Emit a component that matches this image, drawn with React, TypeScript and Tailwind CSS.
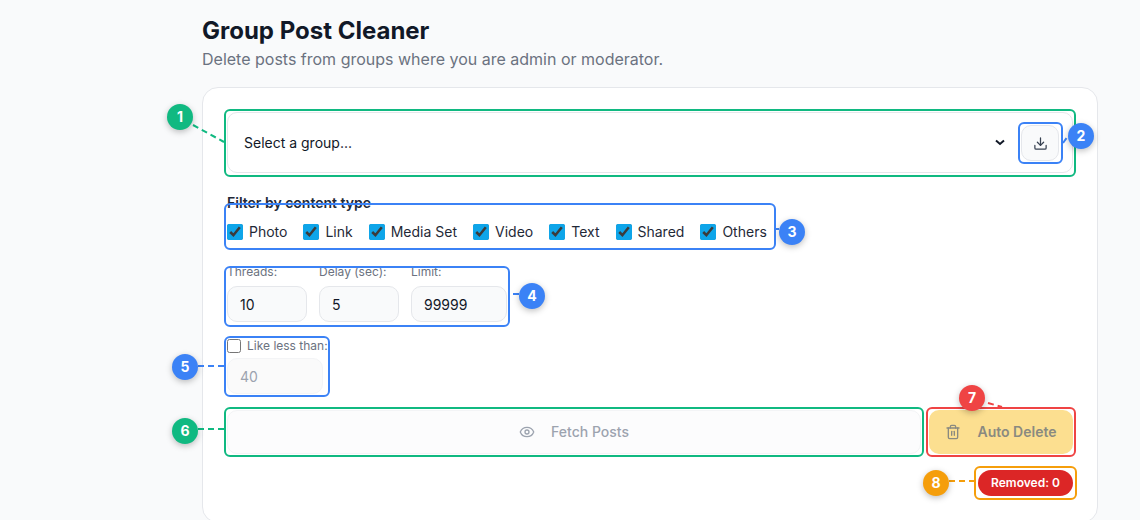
import { Download, Eye, Trash2 } from 'lucide-react';

const contentTypes = ['Photo', 'Link', 'Media Set', 'Video', 'Text', 'Shared', 'Others'];

// highlight frames drawn over the form
const frames = [
  { cls: 'left-[224px] top-[109px] w-[852px] h-[68px] border-[#10b981]' },
  { cls: 'left-[1018px] top-[122px] w-[45px] h-[42px] border-[#3b82f6]' },
  { cls: 'left-[224px] top-[203px] w-[552px] h-[47px] border-[#3b82f6]' },
  { cls: 'left-[224px] top-[266px] w-[286px] h-[61px] border-[#3b82f6]' },
  { cls: 'left-[224px] top-[336px] w-[106px] h-[61px] border-[#3b82f6]' },
  { cls: 'left-[224px] top-[407px] w-[700px] h-[50px] border-[#10b981]' },
  { cls: 'left-[926px] top-[407px] w-[150px] h-[50px] border-[#ef4444]' },
  { cls: 'left-[974px] top-[466px] w-[103px] h-[34px] border-[#f59e0b]' },
];

const badges = [
  { n: 1, cls: 'left-[167px] top-[104px] bg-[#10b981]' },
  { n: 2, cls: 'left-[1068px] top-[123px] bg-[#3b82f6]' },
  { n: 3, cls: 'left-[779px] top-[219px] bg-[#3b82f6]' },
  { n: 4, cls: 'left-[519px] top-[283px] bg-[#3b82f6]' },
  { n: 5, cls: 'left-[172px] top-[354px] bg-[#3b82f6]' },
  { n: 6, cls: 'left-[172px] top-[418px] bg-[#10b981]' },
  { n: 7, cls: 'left-[959px] top-[385px] bg-[#ef4444]' },
  { n: 8, cls: 'left-[923px] top-[470px] bg-[#f59e0b]' },
];

const inputCls =
  'h-9 rounded-[10px] border border-[#e5e7eb] bg-[#f9fafb] px-3 text-sm text-[#111827] outline-none';

export default function App() {
  return (
    <div className="relative h-[520px] overflow-hidden bg-[#f9fafb] pl-[202px] pt-[15px] font-['Inter',sans-serif]">
      <h1 className="text-2xl font-bold text-[#111827]">Group Post Cleaner</h1>
      <p className="text-base text-[#6b7280]">
        Delete posts from groups where you are admin or moderator.
      </p>

      <div className="mt-4 h-[436px] w-[896px] rounded-2xl border border-[#e5e7eb] bg-white p-6">
        <select className="h-[61px] w-full appearance-none rounded-[10px] border border-[#e5e7eb] bg-white pl-4 text-sm text-[#111827] outline-none">
          <option>Select a group...</option>
        </select>

        <div className="mt-5 text-sm font-semibold leading-5 text-[#1f2937]">Filter by content type</div>
        <div className="mt-[11px] flex gap-4">
          {contentTypes.map((t) => (
            <label key={t} className="flex items-center gap-1.5 text-sm leading-4 text-[#1f2937]">
              <input type="checkbox" defaultChecked className="m-0 h-4 w-4 accent-[#0ea5e9]" />
              {t}
            </label>
          ))}
        </div>

        <div className="mt-6 flex gap-3">
          <div className="flex w-20 flex-col gap-1.5">
            <span className="text-xs text-[#6b7280]">Threads:</span>
            <input defaultValue="10" className={`${inputCls} w-20`} />
          </div>
          <div className="flex w-20 flex-col gap-1.5">
            <span className="text-xs text-[#6b7280]">Delay (sec):</span>
            <input defaultValue="5" className={`${inputCls} w-20`} />
          </div>
          <div className="flex w-24 flex-col gap-1.5">
            <span className="text-xs text-[#6b7280]">Limit:</span>
            <input defaultValue="99999" className={`${inputCls} w-24`} />
          </div>
        </div>

        <label className="mt-4 flex items-center gap-1.5 text-xs leading-4 text-[#6b7280]">
          <input type="checkbox" className="m-0 h-3.5 w-3.5" />
          Like less than:
        </label>
        <input
          disabled
          defaultValue="40"
          className="mt-[4px] block h-9 w-24 rounded-[10px] border border-[#f3f4f6] bg-[#fafafa] px-3 text-sm text-[#9ca3af] outline-none"
        />

        <div className="mt-4 flex gap-2">
          <button className="flex h-11 w-[694px] items-center justify-center gap-4 rounded-[10px] border border-[#f3f4f6] bg-[#fcfcfd] text-sm font-medium text-[#9ca3af]">
            <Eye size={16} />
            Fetch Posts
          </button>
          <button className="flex h-11 w-[144px] items-center justify-center gap-4 rounded-[10px] bg-[#fcdf90] text-sm font-semibold text-[#8a8a80]">
            <Trash2 size={16} />
            Auto Delete
          </button>
        </div>

        <div className="mt-4 flex justify-end">
          <span className="flex h-[26px] w-[95px] items-center justify-center rounded-full bg-[#dc2626] text-xs font-semibold text-white">
            Removed: 0
          </span>
        </div>
      </div>

      {/* select arrow, the native one is turned off */}
      <svg className="pointer-events-none absolute left-[994px] top-[136px]" width="12" height="12" viewBox="0 0 12 12" fill="none" stroke="#111827" strokeWidth="2">
        <path d="M2 4.5L6 8L10 4.5" />
      </svg>

      {/* export button sits inside the select box */}
      <button className="absolute left-[1021px] top-[125px] flex h-9 w-[38px] items-center justify-center rounded-[10px] border border-[#e5e7eb] bg-[#f9fafb] text-[#374151]">
        <Download size={15} />
      </button>

      {frames.map((f) => (
        <div key={f.cls} className={`pointer-events-none absolute rounded-[6px] border-2 ${f.cls}`} />
      ))}

      <svg className="pointer-events-none absolute left-0 top-0" width="1140" height="520" fill="none" strokeWidth="2" strokeDasharray="6 4">
        <path d="M193 125L224 142" stroke="#10b981" />
        <path d="M1063 143L1068 136" stroke="#3b82f6" />
        <path d="M776 229L779 229" stroke="#3b82f6" />
        <path d="M513 294L519 294" stroke="#3b82f6" />
        <path d="M198 366L224 366" stroke="#3b82f6" />
        <path d="M198 429L224 429" stroke="#10b981" />
        <path d="M988 403L1002 407" stroke="#ef4444" />
        <path d="M949 481L974 481" stroke="#f59e0b" />
      </svg>

      {badges.map((b) => (
        <div
          key={b.n}
          className={`absolute flex h-[26px] w-[26px] items-center justify-center rounded-full text-sm font-bold text-white shadow-[0_2px_6px_rgba(0,0,0,0.25)] ${b.cls}`}
        >
          {b.n}
        </div>
      ))}
    </div>
  );
}
